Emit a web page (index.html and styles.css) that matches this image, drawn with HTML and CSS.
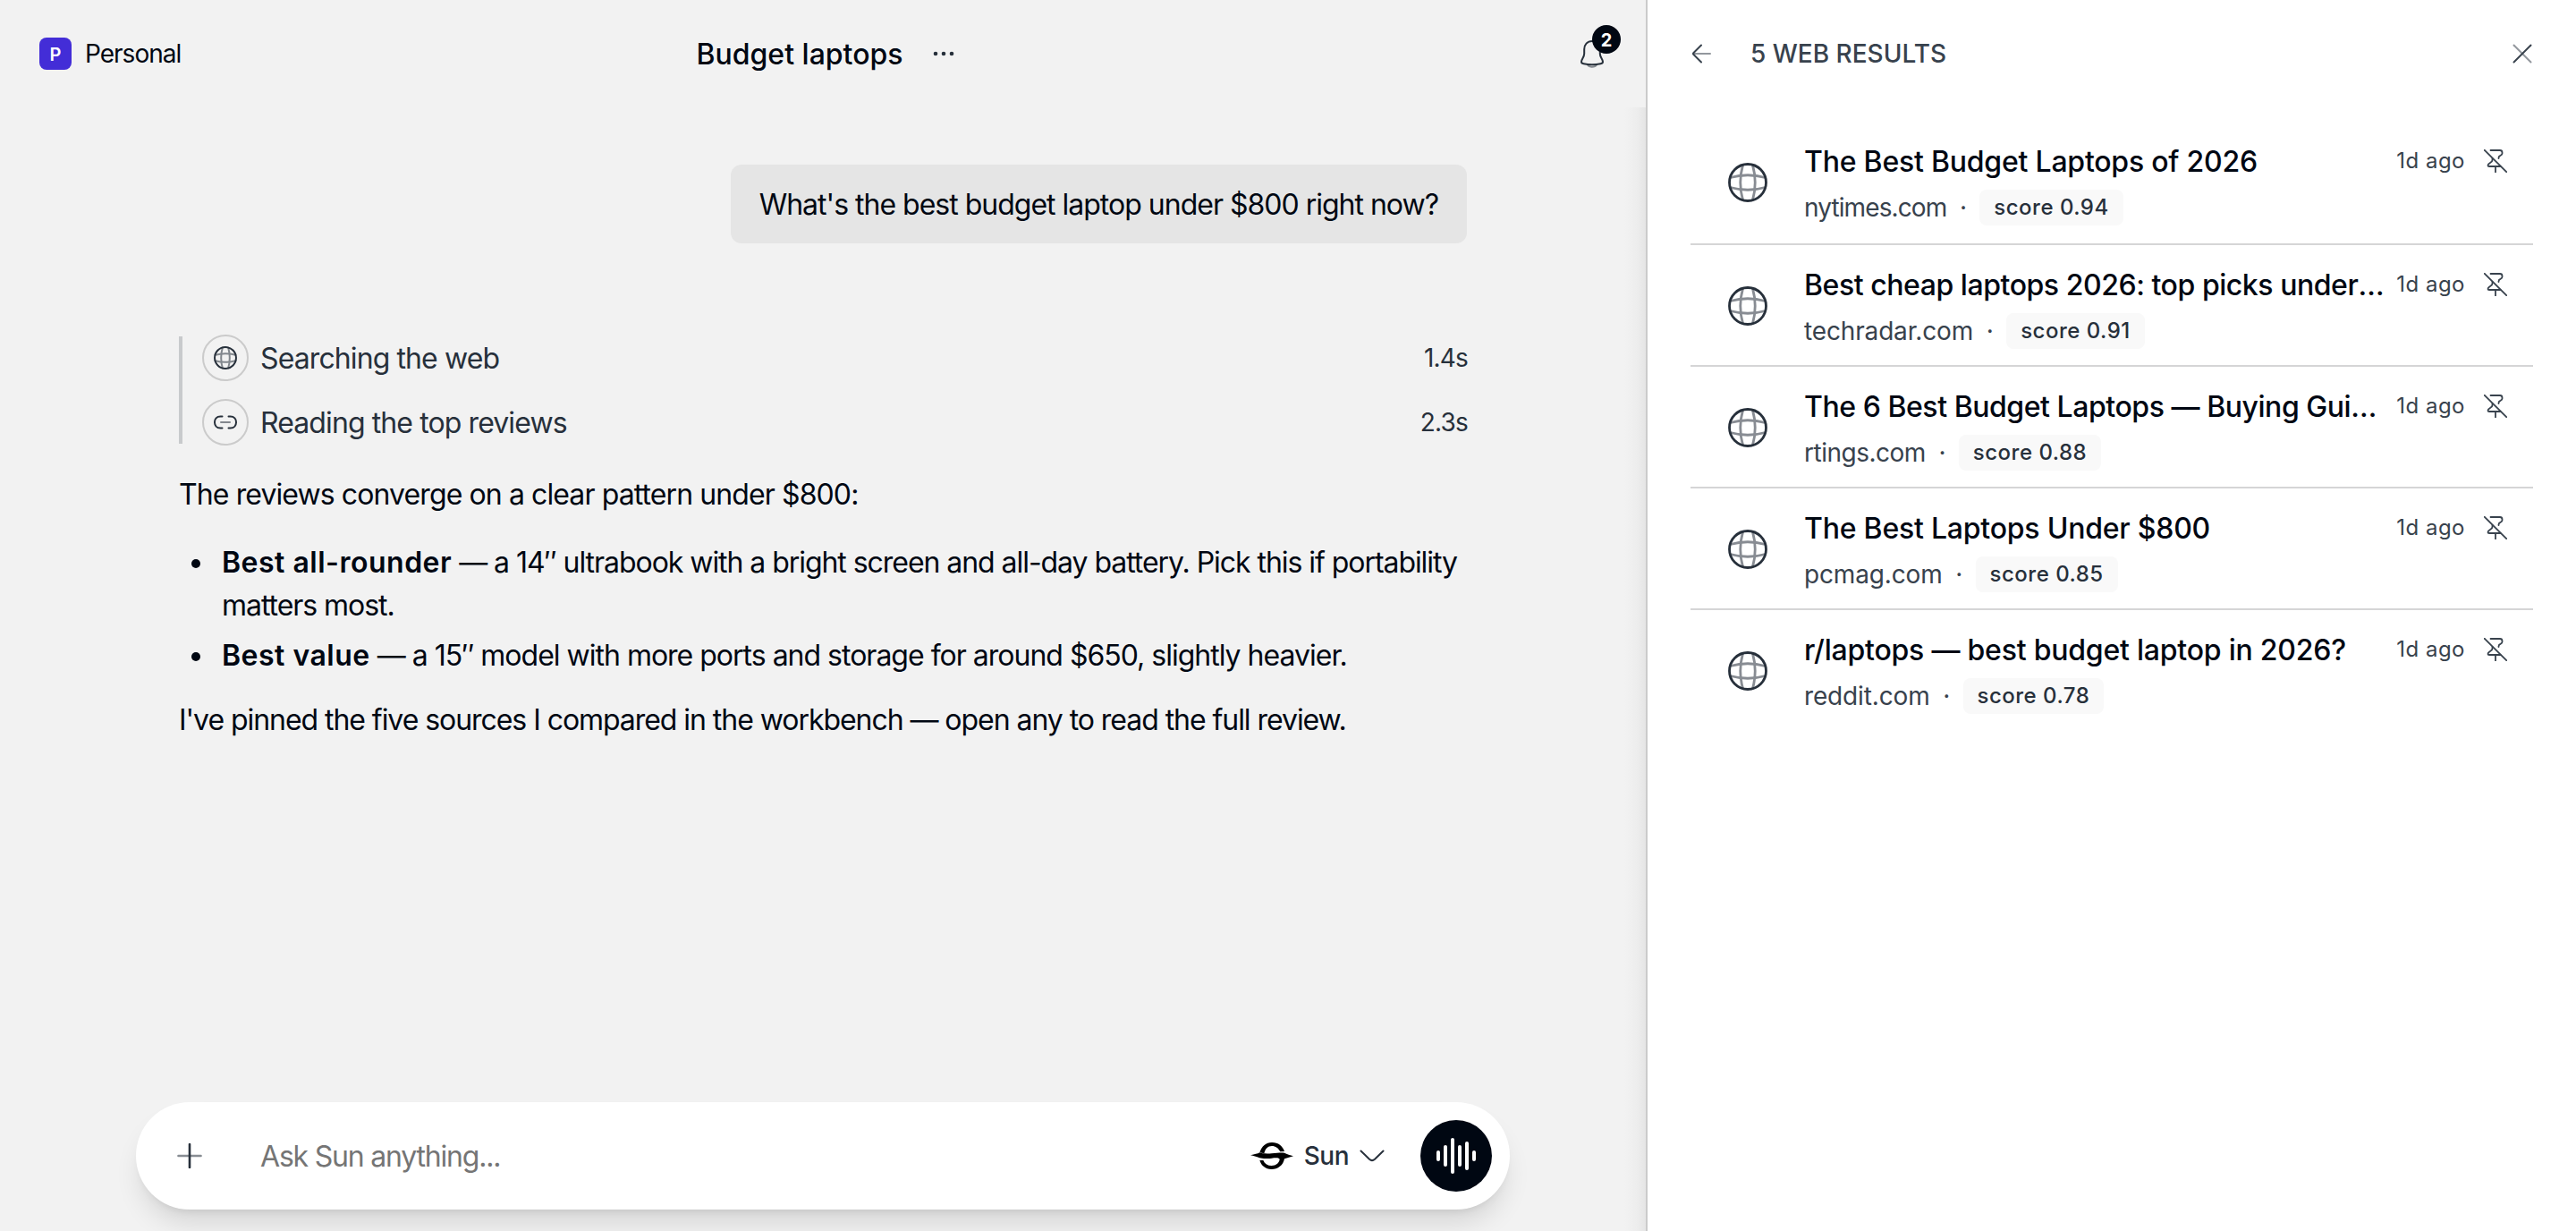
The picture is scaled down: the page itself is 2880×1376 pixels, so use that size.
FILE: index.html
```html
<!DOCTYPE html>
<html lang="en">
<head>
    <meta charset="UTF-8">
    <meta name="viewport" content="width=device-width, initial-scale=1.0">
    <title>Budget laptops</title>
    <link rel="stylesheet" href="styles.css">
</head>
<body>
    <!-- Shared icons -->
    <svg class="icon-defs" aria-hidden="true">
        <symbol id="icon-globe" viewBox="0 0 48 48">
            <g class="faded">
                <path d="M18.5 4.5C15 17 15 31 18.5 43.5M29.5 4.5C33 17 33 31 29.5 43.5"/>
                <path d="M4.5 18.5C17 15 31 15 43.5 18.5M4.5 29.5C17 33 31 33 43.5 29.5"/>
            </g>
            <circle cx="24" cy="24" r="20.5"/>
        </symbol>
        <symbol id="icon-unpin" viewBox="0 0 26 26">
            <path d="M7.5 1H18Q20.5 1 20.5 3.5V4.5Q20.5 6 18.5 6.8Q16.5 7.5 16.5 9.5V10"/>
            <path d="M9.5 10V12Q9.5 13.5 7 15Q4.5 16.5 4.5 18Q4.5 19 6 19H18.5M13 19V25.5"/>
            <path d="M.8.8 25.2 25.2"/>
        </symbol>
    </svg>

    <div class="app">
        <section class="chat">
            <header class="chat-header">
                <div class="workspace">
                    <span class="workspace-badge">P</span>
                    <span>Personal</span>
                </div>
                <div class="chat-title">
                    <h1>Budget laptops</h1>
                    <svg class="dots" viewBox="0 0 24 6"><circle cx="3" cy="3" r="2.3"/><circle cx="12" cy="3" r="2.3"/><circle cx="21" cy="3" r="2.3"/></svg>
                </div>
                <div class="bell">
                    <svg class="icon bell-icon" viewBox="0 0 28 36">
                        <path class="faded" d="M9 30.5C11 33.5 17 33.5 19 30.5"/>
                        <path d="M14 4C8.5 4 5.2 8 5.2 13V18C5.2 22 2 24 2 27C2 28.5 3 29 4.5 29.3C10.5 30.6 17.5 30.6 23.5 29.3C25 29 26 28.5 26 27C26 24 22.8 22 22.8 18V13C22.8 8 19.5 4 14 4Z"/>
                    </svg>
                    <span class="bell-count">2</span>
                </div>
            </header>

            <main class="chat-body">
                <div class="thread">
                    <div class="question">What's the best budget laptop under $800 right now?</div>

                    <div class="steps">
                        <div class="step">
                            <span class="step-icon"><svg class="icon" viewBox="0 0 48 48"><use href="#icon-globe"/></svg></span>
                            <span class="step-label">Searching the web</span>
                            <span class="step-time">1.4s</span>
                        </div>
                        <div class="step">
                            <span class="step-icon">
                                <svg class="icon link-icon" viewBox="0 0 28 28">
                                    <path d="M10.5 7.5H8.5C-.2 7.5-.2 20.5 8.5 20.5H10.5M17.5 7.5H19.5C28.2 7.5 28.2 20.5 19.5 20.5H17.5"/>
                                    <path class="faded" d="M9 14H19"/>
                                </svg>
                            </span>
                            <span class="step-label">Reading the top reviews</span>
                            <span class="step-time">2.3s</span>
                        </div>
                    </div>

                    <div class="answer">
                        <p class="intro">The reviews converge on a clear pattern under $800:</p>
                        <ul>
                            <li><strong>Best all-rounder</strong> — a 14″ ultrabook with a bright screen and all-day battery. Pick this if portability matters most.</li>
                            <li><strong>Best value</strong> — a 15″ model with more ports and storage for around $650, slightly heavier.</li>
                        </ul>
                        <p>I've pinned the five sources I compared in the workbench — open any to read the full review.</p>
                    </div>
                </div>

                <form class="composer">
                    <svg class="icon plus" viewBox="0 0 28 28"><path class="faded" d="M1.5 14H26.5"/><path d="M14 1V27"/></svg>
                    <input type="text" class="composer-input" placeholder="Ask Sun anything...">
                    <div class="model">
                        <svg class="sun-logo" viewBox="0 0 144 96">
                            <path d="M31 37C38 15 52 3 72 3C94 3 108 15 114 33L100 34C94 22 84 15 72 15C58 15 50 24 46 40Z"/>
                            <path d="M0 46C14 43 24 41 31 37C36 41 60 41 71 40C90 38 104 36 114 38C122 42 134 46 144 49C134 52 124 54 114 58C110 80 92 93 71 93C50 93 36 80 31 63L43 63C48 75 58 81 71 81C86 81 96 72 98 60C98 54 86 54 71 56C50 58 40 57 31 55C20 50 10 48 0 46Z"/>
                        </svg>
                        <span>Sun</span>
                        <svg class="icon chevron" viewBox="0 0 28 14"><path d="M1.5 1.5 11 10.8Q14 13.5 17 10.8L26.5 1.5"/></svg>
                    </div>
                    <button type="button" class="voice" aria-label="Voice">
                        <svg viewBox="0 0 44 40"><path d="M2 16V24M10 10V30M18 2V38M26 10V30M34 6V34M42 16V24"/></svg>
                    </button>
                </form>
            </main>
        </section>

        <aside class="panel">
            <header class="panel-header">
                <svg class="icon back" viewBox="0 0 22 22"><path class="faded" d="M2 11H21"/><path d="M11 1.5 2.5 10Q1.5 11 2.5 12L11 20.5"/></svg>
                <h2>5 WEB RESULTS</h2>
                <svg class="icon close" viewBox="0 0 22 22"><path class="faded" d="M1.5 1.5 20.5 20.5"/><path d="M20.5 1.5 1.5 20.5"/></svg>
            </header>
            <ul class="results">
                <li class="result">
                    <svg class="icon result-icon" viewBox="0 0 48 48"><use href="#icon-globe"/></svg>
                    <div class="result-text">
                        <div class="result-top">
                            <h3>The Best Budget Laptops of 2026</h3>
                            <span class="age">1d ago</span>
                            <svg class="icon unpin"><use href="#icon-unpin"/></svg>
                        </div>
                        <div class="result-meta"><span class="tight">nytimes.com</span><i>·</i><span class="score">score 0.94</span></div>
                    </div>
                </li>
                <li class="result">
                    <svg class="icon result-icon" viewBox="0 0 48 48"><use href="#icon-globe"/></svg>
                    <div class="result-text">
                        <div class="result-top">
                            <h3 class="long">Best cheap laptops 2026: top picks under $800</h3>
                            <span class="age">1d ago</span>
                            <svg class="icon unpin"><use href="#icon-unpin"/></svg>
                        </div>
                        <div class="result-meta"><span class="loose">techradar.com</span><i>·</i><span class="score">score 0.91</span></div>
                    </div>
                </li>
                <li class="result">
                    <svg class="icon result-icon" viewBox="0 0 48 48"><use href="#icon-globe"/></svg>
                    <div class="result-text">
                        <div class="result-top">
                            <h3 class="long">The 6 Best Budget Laptops — Buying Guide 2026</h3>
                            <span class="age">1d ago</span>
                            <svg class="icon unpin"><use href="#icon-unpin"/></svg>
                        </div>
                        <div class="result-meta"><span>rtings.com</span><i>·</i><span class="score">score 0.88</span></div>
                    </div>
                </li>
                <li class="result">
                    <svg class="icon result-icon" viewBox="0 0 48 48"><use href="#icon-globe"/></svg>
                    <div class="result-text">
                        <div class="result-top">
                            <h3>The Best Laptops Under $800</h3>
                            <span class="age">1d ago</span>
                            <svg class="icon unpin"><use href="#icon-unpin"/></svg>
                        </div>
                        <div class="result-meta"><span class="loose">pcmag.com</span><i>·</i><span class="score">score 0.85</span></div>
                    </div>
                </li>
                <li class="result">
                    <svg class="icon result-icon" viewBox="0 0 48 48"><use href="#icon-globe"/></svg>
                    <div class="result-text">
                        <div class="result-top">
                            <h3>r/laptops — best budget laptop in 2026?</h3>
                            <span class="age">1d ago</span>
                            <svg class="icon unpin"><use href="#icon-unpin"/></svg>
                        </div>
                        <div class="result-meta"><span class="loose">reddit.com</span><i>·</i><span class="score">score 0.78</span></div>
                    </div>
                </li>
            </ul>
        </aside>
    </div>
</body>
</html>
```
FILE: styles.css
```css
* {
    box-sizing: border-box;
}
body {
    margin: 0;
    font-family: Inter, "Liberation Sans", sans-serif;
    font-size: 32px;
    line-height: 48px;
    letter-spacing: -1px;
    color: #000712;
    background-color: #f2f2f2;
}
h1, h2, h3, p, ul {
    margin: 0;
    padding: 0;
}
.icon-defs {
    display: none;
}
.icon {
    display: block;
    flex: none;
    fill: none;
    stroke: #27303b;
    stroke-width: 2;
    stroke-linecap: round;
    stroke-linejoin: round;
}
.faded {
    opacity: 0.55;
}
.app {
    display: flex;
    height: 1376px;
}

/* Chat column */
.chat {
    display: flex;
    flex-direction: column;
    width: 1840px;
}
.chat-header {
    display: grid;
    grid-template-columns: 1fr auto 1fr;
    align-items: center;
    height: 120px;
    padding: 0 46px 0 44px;
}
.workspace {
    display: flex;
    align-items: center;
    gap: 15px;
    font-size: 28px;
}
.workspace-badge {
    width: 36px;
    height: 36px;
    border-radius: 8px;
    background-color: #432dd7;
    color: white;
    font-size: 20px;
    font-weight: 600;
    line-height: 38px;
    letter-spacing: 0;
    text-align: center;
}
.chat-title {
    display: flex;
    align-items: center;
    gap: 33px;
    margin-left: 7px;
}
.chat-title h1 {
    padding-top: 1px;
    font-size: 32px;
    font-weight: 500;
    letter-spacing: 0;
}
.dots {
    width: 24px;
    height: 6px;
    fill: #27303b;
}
.bell {
    position: relative;
    justify-self: end;
    width: 28px;
    height: 36px;
}
.bell-icon {
    width: 28px;
    height: 36px;
}
.bell-count {
    position: absolute;
    left: 14px;
    top: -14px;
    width: 32px;
    height: 32px;
    border-radius: 50%;
    background-color: #000712;
    color: white;
    font-size: 20px;
    font-weight: 700;
    line-height: 34px;
    letter-spacing: 0;
    text-align: center;
}
.chat-body {
    flex: 1;
    display: flex;
    flex-direction: column;
    align-items: center;
    justify-content: space-between;
    padding: 64px 0 24px;
    background: linear-gradient(to left, #e5e5e5, #ededed 10px, #f2f2f2 24px);
}
.thread {
    display: flex;
    flex-direction: column;
    width: 1440px;
}
.question {
    align-self: flex-end;
    padding: 21px 32px 19px;
    border-radius: 12px;
    background-color: #e5e5e5;
}

/* Progress steps */
.steps {
    display: flex;
    flex-direction: column;
    gap: 24px;
    margin-top: 104px;
    padding-left: 22px;
    border-left: 4px solid #c8cacc;
    color: #27303b;
}
.step {
    display: flex;
    align-items: center;
    gap: 13px;
    height: 48px;
}
.step-icon {
    display: flex;
    align-items: center;
    justify-content: center;
    width: 52px;
    height: 52px;
    border: 2px solid #cbcbcb;
    border-radius: 50%;
}
.step-icon .icon {
    width: 28px;
    height: 28px;
    stroke-width: 3.4;
}
.step-icon .link-icon {
    stroke-width: 2;
}
.step-label {
    padding-top: 2px;
    letter-spacing: -0.9px;
}
.step-time {
    margin-left: auto;
    margin-right: -1px;
    font-size: 28px;
    letter-spacing: -0.8px;
}

/* Answer */
.answer {
    margin-top: 33px;
    letter-spacing: -1.05px;
}
.answer .intro {
    letter-spacing: -0.9px;
}
.answer ul {
    margin: 28px 0 24px;
    padding-left: 48px;
    list-style: none;
}
.answer li + li {
    margin-top: 8px;
    letter-spacing: -1px;
}
.answer li::before {
    content: "";
    display: inline-block;
    width: 10px;
    height: 10px;
    margin: 0 24px 5px -34px;
    border-radius: 50%;
    background-color: #000712;
    vertical-align: baseline;
}
.answer strong {
    font-weight: 600;
    letter-spacing: 0.5px;
}

/* Composer */
.composer {
    display: flex;
    align-items: center;
    width: 1536px;
    height: 120px;
    padding: 0 20px 0 46px;
    border-radius: 60px;
    background-color: white;
    box-shadow: 0 20px 30px -6px rgba(0, 0, 0, 0.12), 0 8px 12px -8px rgba(0, 0, 0, 0.12);
}
.plus {
    width: 28px;
    height: 28px;
    stroke-width: 2.6;
}
.composer-input {
    flex: 1;
    margin-left: 65px;
    padding: 2px 0 0;
    border: none;
    outline: none;
    background: none;
    font: inherit;
    letter-spacing: -1.2px;
}
.composer-input::placeholder {
    color: #757575;
}
.model {
    display: flex;
    align-items: center;
    margin-right: 40px;
    font-size: 28px;
    font-weight: 500;
    letter-spacing: -0.5px;
    color: #27303b;
}
.sun-logo {
    width: 48px;
    height: 32px;
    margin-right: 12px;
}
.chevron {
    width: 28px;
    height: 14px;
    margin-left: 12px;
}
.voice {
    display: flex;
    align-items: center;
    justify-content: center;
    width: 80px;
    height: 80px;
    padding: 0;
    border: none;
    border-radius: 50%;
    background-color: #000712;
}
.voice svg {
    width: 44px;
    height: 40px;
    fill: none;
    stroke: white;
    stroke-width: 4;
    stroke-linecap: round;
}

/* Results panel */
.panel {
    flex: 1;
    min-width: 0;
    padding: 0 48px;
    border-left: 2px solid #cbcbcb;
    background-color: white;
}
.panel-header {
    display: flex;
    align-items: center;
    height: 120px;
    padding: 0 1px;
}
.panel-header h2 {
    margin-left: 44px;
    font-size: 28px;
    font-weight: 500;
    letter-spacing: 0;
    color: #38424d;
}
.back, .close {
    width: 22px;
    height: 22px;
    stroke: #38424d;
}
.close {
    margin-left: auto;
}
.results {
    margin-top: 16px;
    list-style: none;
}
.result {
    display: flex;
    align-items: center;
    gap: 39px;
    padding: 20px 29px 18px 40px;
    border-bottom: 2px solid #d5d5d6;
}
.result:first-child {
    padding-bottom: 20px;
}
.result:last-child {
    border-bottom: none;
}
.result-icon {
    width: 48px;
    height: 48px;
    stroke-width: 2.8;
}
.result-text {
    flex: 1;
    min-width: 0;
}
.result-top {
    display: flex;
    align-items: center;
    height: 48px;
}
.result-top h3 {
    flex: 1;
    padding-top: 2px;
    overflow: hidden;
    white-space: nowrap;
    text-overflow: ellipsis;
    font-size: 32px;
    font-weight: 500;
    letter-spacing: -0.22px;
}
.result-top .long {
    letter-spacing: -0.45px;
}
.age {
    margin: 0 21px 0 8px;
    font-size: 24px;
    letter-spacing: 0.5px;
    color: #38424d;
}
.unpin {
    width: 26px;
    height: 26px;
    stroke: #38424d;
    stroke-width: 1.8;
}
.result-meta {
    display: flex;
    align-items: center;
    height: 40px;
    margin-top: 8px;
    font-size: 28px;
    letter-spacing: -0.5px;
    color: #38424d;
}
.result-meta i {
    width: 37px;
    text-align: center;
    font-style: normal;
}
.tight {
    letter-spacing: -0.9px;
}
.loose {
    letter-spacing: -0.15px;
}
.score {
    padding: 0 16px;
    border-radius: 8px;
    background-color: #f9f9f9;
    color: #27303b;
    font-size: 24px;
    font-weight: 500;
    line-height: 40px;
    letter-spacing: 0.5px;
}
```
